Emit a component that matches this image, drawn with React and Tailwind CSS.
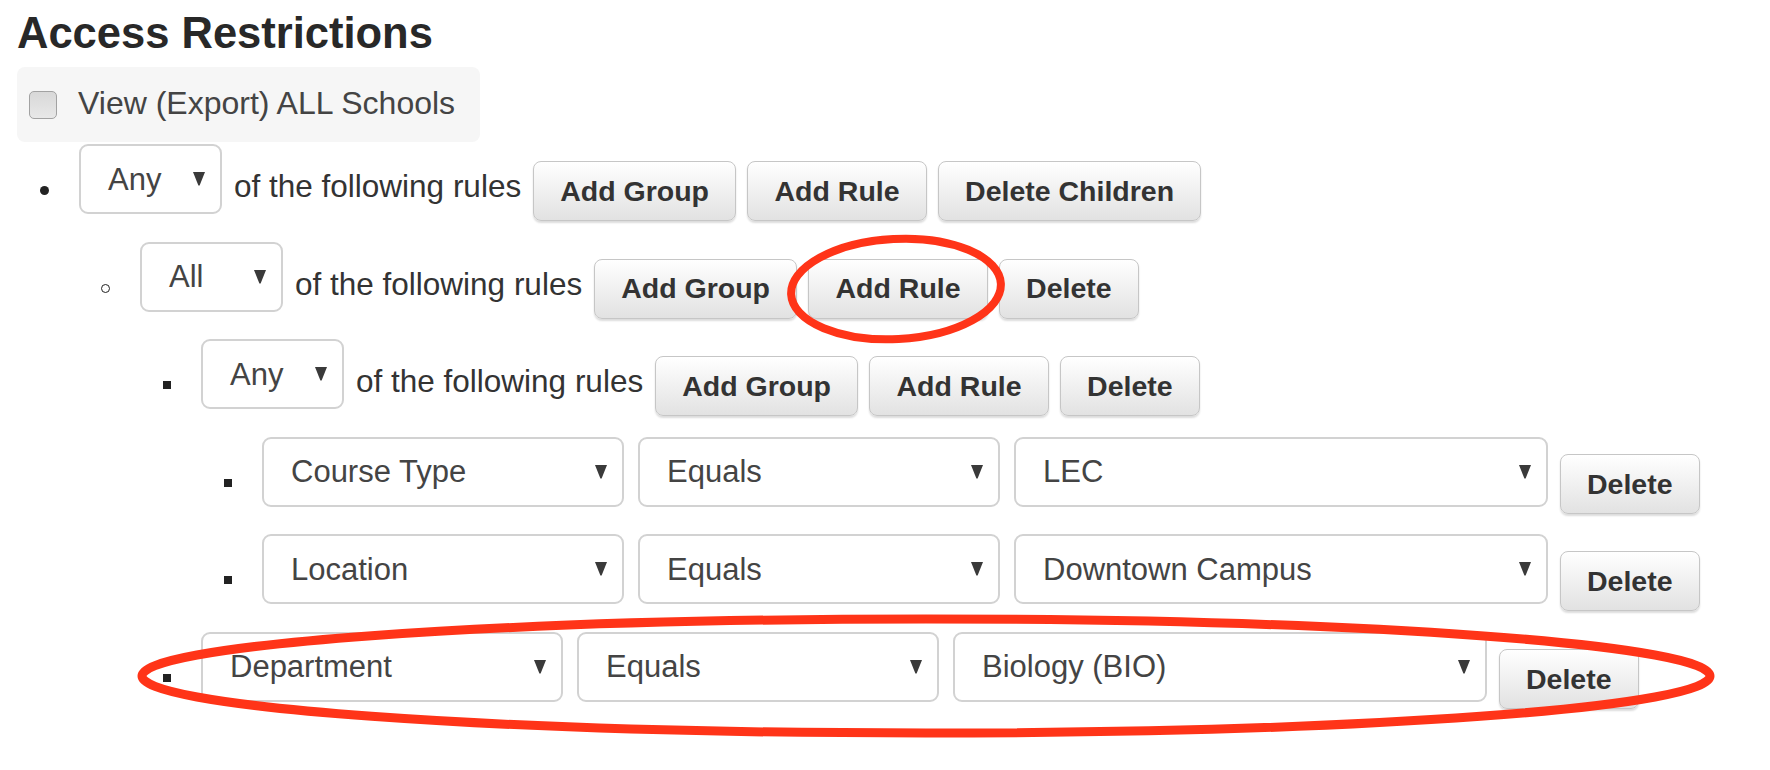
import React from "react";

const Arrow = () => (
  <svg width="12" height="14" viewBox="0 0 12 14" className="shrink-0">
    <path d="M0 0 H12 L6.6 13.5 H5.4 Z" fill="#3a3a3a" />
  </svg>
);

const Select = ({ value, width }) => (
  <div
    className={`h-[70px] ${width} shrink-0 flex items-center justify-between pl-[27px] pr-[15px] bg-white border-2 border-[#d2d2d2] rounded-[9px] text-[31px] leading-none text-[#444]`}
  >
    <span>{value}</span>
    <Arrow />
  </div>
);

const Button = ({ label }) => (
  <button className="mt-[17px] h-[60px] shrink-0 px-[26px] rounded-[8px] border border-[#c6c6c6] bg-gradient-to-b from-white to-[#e2e2e2] shadow-[0_2px_2px_rgba(0,0,0,0.14)] text-[28.5px] font-bold leading-none text-[#333]">
    {label}
  </button>
);

const Bullet = ({ kind }) => {
  let shape = "w-[8px] h-[8px] bg-[#222]";
  if (kind === "disc") shape = "w-[9px] h-[9px] rounded-full bg-[#222]";
  if (kind === "circle") shape = "w-[9px] h-[9px] rounded-full border-[1.5px] border-[#222]";
  return (
    <div className="w-[62px] shrink-0 flex justify-end pr-[30px] pt-[42px]">
      <div className={shape} />
    </div>
  );
};

const GroupRow = ({ indent, bullet, mode, buttons }) => (
  <li className={`flex items-start ${indent}`}>
    <Bullet kind={bullet} />
    <Select value={mode} width="w-[143px]" />
    <span className="ml-[12px] mt-[24px] text-[31.5px] leading-[36px] whitespace-nowrap">
      of the following rules
    </span>
    <div className="ml-[12px] flex gap-[11.5px]">
      {buttons.map((b) => (
        <Button key={b} label={b} />
      ))}
    </div>
  </li>
);

const RuleRow = ({ indent, field, value }) => (
  <li className={`flex items-start ${indent}`}>
    <Bullet kind="square" />
    <div className="flex gap-[14px]">
      <Select value={field} width="w-[362px]" />
      <Select value="Equals" width="w-[362px]" />
      <Select value={value} width="w-[534px]" />
    </div>
    <div className="ml-[12px]">
      <Button label="Delete" />
    </div>
  </li>
);

export default function App() {
  return (
    <div className="relative w-[1770px] h-[770px] overflow-hidden bg-white pl-[17px] pt-[8px] font-['Liberation_Sans',Arial,sans-serif] text-[#333]">
      <h3 className="text-[43.5px] font-bold leading-[50px] text-[#282828]">
        Access Restrictions
      </h3>

      <div className="mt-[9px] w-[463px] h-[75px] bg-[#f6f6f6] rounded-[8px] flex items-center pl-[12px]">
        <div className="w-[28px] h-[28px] rounded-[5px] border-[1.5px] border-[#a2a2a2] bg-gradient-to-b from-[#d8d8d8] to-[#e8e8e8]" />
        <span className="ml-[21px] mb-[4px] text-[32px] leading-none text-[#444]">
          View (Export) ALL Schools
        </span>
      </div>

      <ul className="mt-[2px] flex flex-col gap-[20.6px]">
        <GroupRow
          indent="ml-0"
          bullet="disc"
          mode="Any"
          buttons={["Add Group", "Add Rule", "Delete Children"]}
        />
        <GroupRow
          indent="ml-[61px]"
          bullet="circle"
          mode="All"
          buttons={["Add Group", "Add Rule", "Delete"]}
        />
        <GroupRow
          indent="ml-[122px]"
          bullet="square"
          mode="Any"
          buttons={["Add Group", "Add Rule", "Delete"]}
        />
        <RuleRow indent="ml-[183px]" field="Course Type" value="LEC" />
        <RuleRow indent="ml-[183px]" field="Location" value="Downtown Campus" />
        <RuleRow indent="ml-[122px]" field="Department" value="Biology (BIO)" />
      </ul>

      {/* annotation marks drawn over the form */}
      <svg
        className="absolute top-0 left-0 pointer-events-none"
        width="1770"
        height="770"
        viewBox="0 0 1770 770"
      >
        <ellipse cx="896" cy="289" rx="105" ry="50" fill="none" stroke="#ff3418" strokeWidth="8" transform="rotate(-3 896 289)" />
        <ellipse cx="926" cy="676" rx="784" ry="57" fill="none" stroke="#ff3418" strokeWidth="9" />
      </svg>
    </div>
  );
}
